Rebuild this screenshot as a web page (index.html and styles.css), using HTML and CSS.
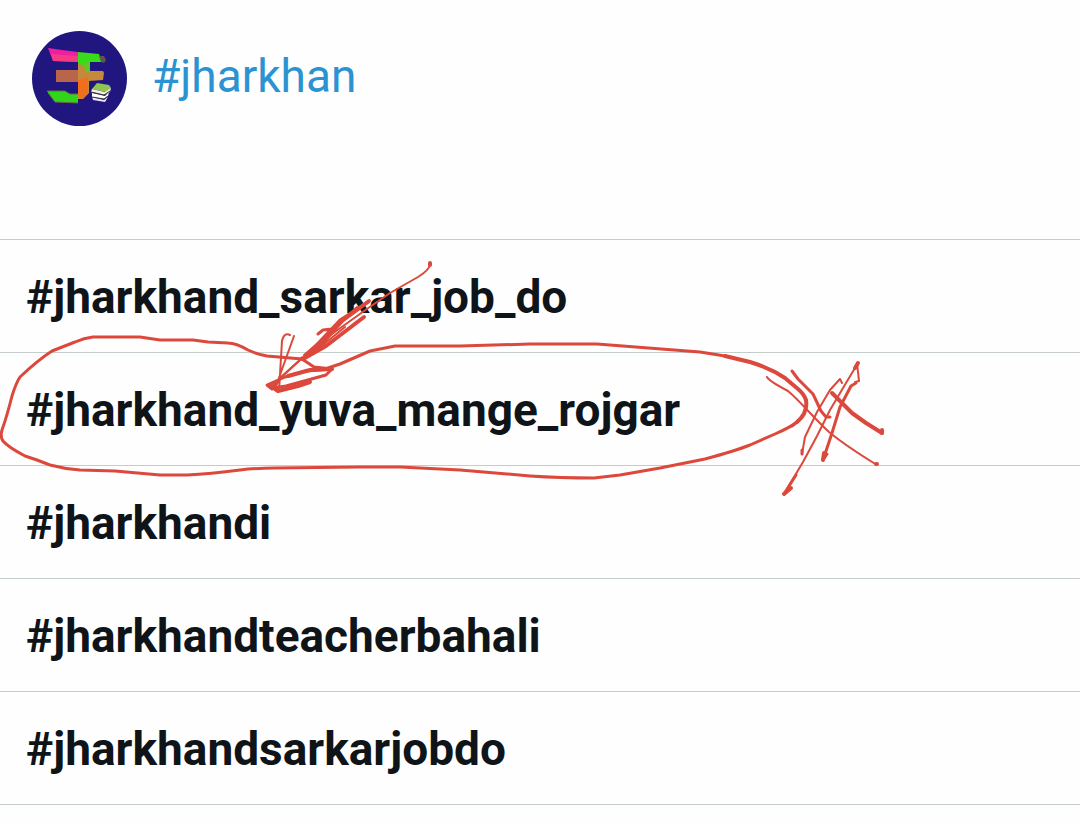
FILE: index.html
```
<!DOCTYPE html>
<html lang="en">
<head>
<meta charset="utf-8">
<meta name="viewport" content="width=device-width, initial-scale=1">
<title>Hashtag suggestions</title>
<link rel="stylesheet" href="styles.css">
</head>
<body>
<main class="composer">
  <header class="compose-bar">
    <svg class="avatar" viewBox="0 0 95 95" role="img" aria-label="Profile picture">
      <circle cx="47.500" cy="47.500" r="47.500" fill="#21167f"/>
      <path d="M16 17 30 19 46 21V31L21 30Z" fill="#ee1fa0"/>
      <path d="M19 23 46 25V31L21 30Z" fill="#f53a86"/>
      <path d="M46 21 67 23 70 31H57V40H46Z" fill="#38dc19"/>
      <path d="M67 25 72 25 74 29 72 32 69 31Z" fill="#5a5a4a"/>
      <path d="M24 39H47V51H24Z" fill="#b9654b"/>
      <path d="M46 32 56 38 57 40H71L72 42 71 49 57 50V62L51 68H46Z" fill="#c5893b"/>
      <path d="M56 31H58V40L55 42 51 34Z" fill="#5fc92a"/>
      <path d="M46 49 56 46V61L51 68 46 65Z" fill="#ef6f1e"/>
      <path d="M15 60 33 60 38 63H46V72L23 71Z" fill="#2fd61a"/>
      <path d="M15 60H33L38 63H46M16 62 23 71 46 72" fill="none" stroke="#6d6740" stroke-width="1"/>
      <path d="M65 52 77 54 79 57 74 61 60 58Z" fill="#8fc552"/>
      <path d="M60 58 73 61 79 57 78 61 72 64 59 61Z" fill="#f4efd9"/>
      <path d="M60 62 73 65 77 61 76 65 72 68 60 66Z" fill="#fff"/>
      <path d="M60 66 72 69 76 66 73 71 61 69Z" fill="#e9e4fb"/>
      <path d="M59 61 72 64 78 60M60 66 72 68 76 65" fill="none" stroke="#39303a" stroke-width="1"/>
    </svg>
    <input class="compose-input" type="text" value="#jharkhan" aria-label="Post text" spellcheck="false">
  </header>
  <ul class="suggestions">
    <li class="suggestion"><button class="tag" type="button">#jharkhand_sarkar_job_do</button></li>
    <li class="suggestion"><button class="tag" type="button">#jharkhand_yuva_mange_rojgar</button></li>
    <li class="suggestion"><button class="tag" type="button">#jharkhandi</button></li>
    <li class="suggestion"><button class="tag" type="button">#jharkhandteacherbahali</button></li>
    <li class="suggestion"><button class="tag" type="button">#jharkhandsarkarjobdo</button></li>
  </ul>
  <svg class="ink" width="900" height="520" viewBox="0 0 900 520" aria-hidden="true">
    <!-- loop around the second suggestion -->
    <path stroke-width="3" d="M302 359 267 356Q256 354 248 350Q236 343 228 343L208 342 193 340H160L140 337H93Q84 338 75 342L52 351Q38 360 20 377Q16 383 12 396Q7 416 2 430Q0 437 3 441Q8 447 25 456L37 460 50 465Q65 469 80 470L115 471 160 475H187Q210 474 240 470Q258 468 275 468L360 467H400L460 470 530 476Q560 478 594 478L620 475 660 468 705 459Q735 451 750 445L775 434Q791 427 797 422"/>
    <path stroke-width="3" d="M725 356 700 352 597 344H530L460 346H395L370 351 340 364 325 369"/>
    <path stroke-width="4" d="M797 422Q808 413 806 400Q804 394 798 389L785 378Q770 368 750 362L725 356"/>
    <!-- arrow shaft -->
    <path stroke-width="2" d="M430 264C430 268 426 272 418 277L390 293 364 311 332 334 300 360 272 386"/>
    <path stroke-width="4" d="M430 263V265M369 301 342 321 325 340 310 355 303 359 326 346 364 317"/>
    <path stroke-width="3" d="M368 302 340 320 305 357M318 334 323 330 332 329 321 341 308 355"/>
    <path stroke-width="2" d="M357 307 325 337 304 355M345 327 313 353 301 358"/>
    <!-- arrow head -->
    <path stroke-width="3" d="M302 359 314 367 332 369M332 369 306 371 285 377 267 385 272 389 281 378M332 369 326 375 286 386 272 388"/>
    <path stroke-width="4" d="M332 369 310 370 288 376M271 386 278 391 298 386 310 382"/>
    <path stroke-width="2" d="M294 336 285 361 275 389M290 335Q284 332 282 341L279 391M301 359 280 378"/>
    <!-- crossing strokes beside the loop -->
    <path stroke-width="2" d="M767 377Q769 381 788 391C799 400 812 416 829 432Q846 446 877 465"/>
    <path stroke-width="3" d="M792 371 798 379 813 394 821 411 826 417H830"/>
    <path stroke-width="4" d="M832 393 852 413 866 423 882 433"/>
    <path stroke-width="2" d="M842 383 840 379 830 390 817 412 805 437 802 454M858 363 846 383 830 410 817 436 803 462 784 494M857 363 859 381 855 382"/>
    <path stroke-width="3" d="M856 383 851 386 840 407 832 433 823 460 827 454M784 494 796 475M802 450V454M797 422 792 426"/>
    <path stroke-width="4" d="M791 488 784 494M824 453 823 460M858 363 855 368M876 464H877M882 430V433"/>
  </svg>
</main>
</body>
</html>
```
FILE: styles.css
```
* {
  box-sizing: border-box;
}

body {
  margin: 0;
  background: #fefefe;
  color: #0f1419;
  font-family: Roboto, "Noto Sans", sans-serif;
  font-size: 46px;
}

.composer {
  position: relative;
  overflow-x: clip;
}

.compose-bar {
  display: flex;
  align-items: flex-start;
  gap: 25px;
  min-height: 239px;
  padding: 31px 32px;
}

.avatar {
  flex: none;
  width: 95px;
  height: 95px;
}

.compose-input {
  flex: 1;
  min-width: 0;
  height: 90px;
  padding: 0;
  border: 0;
  outline: 0;
  background: transparent;
  color: #2b93d1;
  font: inherit;
}

.suggestions {
  margin: 0;
  padding: 0;
  border-top: 1px solid #c4cccc;
  list-style: none;
}

.suggestion {
  border-bottom: 1px solid #c4cccc;
}

.tag {
  display: block;
  width: 100%;
  padding: 29px 26px 27px;
  border: 0;
  background: transparent;
  color: inherit;
  font: inherit;
  font-weight: 700;
  line-height: 56px;
  text-align: left;
  cursor: pointer;
}

/* Hand-drawn marks lie over the list. */
.ink {
  position: absolute;
  top: 0;
  left: 0;
  fill: none;
  stroke: #dc483c;
  stroke-linecap: round;
  stroke-linejoin: round;
  pointer-events: none;
}
```
